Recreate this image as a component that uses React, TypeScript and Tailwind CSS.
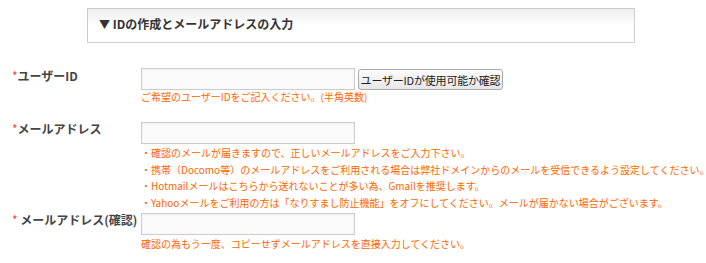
export default function App() {
  return (
    <div className="h-[263px] w-[706px] overflow-hidden bg-white font-['Noto_Sans_CJK_JP','Noto_Sans',sans-serif] text-[#444]">
      <div className="pt-[8px] pl-[87px]">
        <div className="h-[35px] w-[548px] border border-[#cccccc] bg-gradient-to-b from-[#eeeeee] via-white to-white pl-[11px] pt-[6px] text-[12px] font-bold leading-[18px] text-[#333]">
          <span className="text-[11px]">▼</span> IDの作成とメールアドレスの入力
        </div>
      </div>

      <div className="mt-[25px] flex flex-col">
        {/* user id */}
        <div className="flex">
          <div className="w-[141px] shrink-0 pl-[12px] text-[12px] font-bold leading-[16px]">
            <span className="font-normal text-[#ff4433]">*</span>ユーザーID
          </div>
          <div>
            <div className="flex items-start gap-[3px]">
              <input className="h-[22px] w-[214px] border border-[#cccccc] bg-[#fafafa] shadow-[inset_0_1px_2px_rgba(0,0,0,0.05)] outline-none" />
              <button className="mt-[1px] h-[21px] w-[145px] rounded-[3px] border border-[#a9a9a9] bg-gradient-to-b from-[#fdfdfd] to-[#e6e6e6] text-[11px] font-normal leading-[18px] tracking-[-0.2px] text-[#222]">
                ユーザーIDが使用可能か確認
              </button>
            </div>
            <p className="text-[10px] leading-[14px] text-[#ff6600]">
              ご希望のユーザーIDをご記入ください。(半角英数)
            </p>
          </div>
        </div>

        {/* email */}
        <div className="mt-[17px] flex">
          <div className="w-[141px] shrink-0 pl-[12px] text-[12px] font-bold leading-[16px]">
            <span className="font-normal text-[#ff4433]">*</span>メールアドレス
          </div>
          <div className="min-w-0 flex-1">
            <input className="h-[22px] w-[214px] border border-[#cccccc] bg-[#fafafa] shadow-[inset_0_1px_2px_rgba(0,0,0,0.05)] outline-none" />
            <ul className="w-max text-[10px] leading-[16.5px] whitespace-nowrap text-[#ff6600]">
              <li>・確認のメールが届きますので、正しいメールアドレスをご入力下さい。</li>
              <li>・携帯（Docomo等）のメールアドレスをご利用される場合は弊社ドメインからのメールを受信できるよう設定してください。</li>
              <li>・Hotmailメールはこちらから送れないことが多い為、Gmailを推奨します。</li>
              <li>・Yahooメールをご利用の方は「なりすまし防止機能」をオフにしてください。メールが届かない場合がございます。</li>
            </ul>
          </div>
        </div>

        {/* email confirm */}
        <div className="mt-[1px] flex">
          <div className="w-[141px] shrink-0 pl-[12px] text-[12px] font-bold leading-[16px] whitespace-nowrap">
            <span className="font-normal text-[#ff4433]">*</span> メールアドレス(確認)
          </div>
          <div>
            <input className="h-[22px] w-[214px] border border-[#cccccc] bg-[#fafafa] shadow-[inset_0_1px_2px_rgba(0,0,0,0.05)] outline-none" />
            <p className="text-[10px] leading-[15px] text-[#ff6600]">
              確認の為もう一度、コピーせずメールアドレスを直接入力してください。
            </p>
          </div>
        </div>
      </div>
    </div>
  );
}
